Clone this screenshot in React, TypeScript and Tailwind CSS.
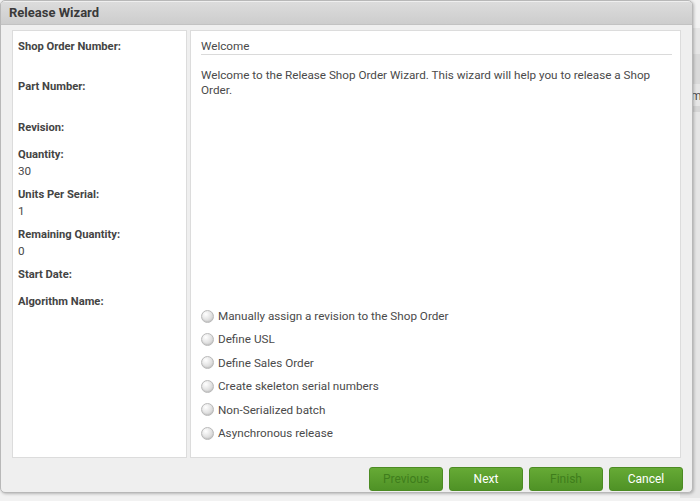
import React from "react";

const fields: { label: string; value?: string; blank?: boolean }[] = [
  { label: "Shop Order Number:", blank: true },
  { label: "Part Number:", blank: true },
  { label: "Revision:" },
  { label: "Quantity:", value: "30" },
  { label: "Units Per Serial:", value: "1" },
  { label: "Remaining Quantity:", value: "0" },
  { label: "Start Date:" },
  { label: "Algorithm Name:" },
];

const options = [
  "Manually assign a revision to the Shop Order",
  "Define USL",
  "Define Sales Order",
  "Create skeleton serial numbers",
  "Non-Serialized batch",
  "Asynchronous release",
];

function Radio() {
  return (
    <span className="inline-block w-[13px] h-[13px] rounded-full border border-[#b9b9b9] bg-[radial-gradient(circle_at_35%_30%,#ffffff_0%,#e6e6e6_45%,#c4c4c4_100%)] shadow-[inset_0_-1px_1px_rgba(0,0,0,0.08)]" />
  );
}

function Btn({ label, disabled }: { label: string; disabled?: boolean }) {
  return (
    <button
      className={
        "w-[74px] h-[24px] rounded-[3px] border border-[#4c8b23] bg-[linear-gradient(#66aa35,#4f9226)] text-[12px] leading-none " +
        (disabled ? "text-[#3f7d1c]" : "text-white")
      }
    >
      {label}
    </button>
  );
}

export default function App() {
  return (
    <div
      className="relative w-[700px] h-[501px] overflow-hidden bg-[#f2f2f2] text-[#4a4a4a]"
      style={{ fontFamily: "Roboto, 'Liberation Sans', sans-serif" }}
    >
      {/* page behind the dialog */}
      <div className="absolute left-[680px] top-[28px] w-[20px] h-[470px] bg-[#e6e6e6]">
        <div className="h-[26px]" />
        <div className="h-[30px] bg-[#dadada]" />
        <div className="h-[28px] border-b-[6px] border-[#d6d6d6] text-[12px] leading-[14px] pt-[5px] pl-[11px]">m</div>
      </div>

      <div className="absolute left-0 top-0 w-[693px] h-[493px] rounded-[5px] border border-[#b8b8b8] bg-[#efefef] shadow-[1px_1px_3px_rgba(0,0,0,0.25)] flex flex-col overflow-hidden">
        <div className="h-[23px] mt-[1px] bg-[linear-gradient(#dcdcdc,#cdcdcd)] border-b border-[#c2c2c2] flex items-center pl-[8px]">
          <span className="text-[13px] font-bold text-[#3a3a3a]">Release Wizard</span>
        </div>
        <div className="flex gap-[3px] px-[11px] pt-[5px] h-[433px]">
          <div className="w-[175px] h-full bg-white border border-[#dcdcdc] pl-[5px] pt-[7px] text-[11.7px]">
            {fields.map((f, i) => (
              <div key={i} className={f.value !== undefined || f.blank ? "mb-[6.3px]" : "mb-[10px]"}>
                <div className="font-bold leading-[17px] text-[#444] text-[11.2px]">{f.label}</div>
                {f.value !== undefined && <div className="leading-[17px]">{f.value}</div>}
                {f.blank && <div className="h-[17px]" />}
              </div>
            ))}
          </div>
          <div className="flex-1 h-full bg-white border border-[#dcdcdc] pl-[10px] pr-[8px] pt-[8px] text-[11.7px] flex flex-col">
            <div className="leading-[15px] border-b border-[#dadada]">Welcome</div>
            <div className="mt-[13px] leading-[15px]">
              Welcome to the Release Shop Order Wizard. This wizard will help you to release a Shop Order.
            </div>
            <div className="mt-auto mb-[16px] flex flex-col gap-[7.4px]">
              {options.map((o) => (
                <div key={o} className="flex items-center gap-[4px] h-[16px]">
                  <Radio />
                  <span className="leading-[16px]">{o}</span>
                </div>
              ))}
            </div>
          </div>
        </div>
        <div className="flex justify-end gap-[6px] pr-[9px] pt-[9px]">
          <Btn label="Previous" disabled />
          <Btn label="Next" />
          <Btn label="Finish" disabled />
          <Btn label="Cancel" />
        </div>
      </div>
    </div>
  );
}
